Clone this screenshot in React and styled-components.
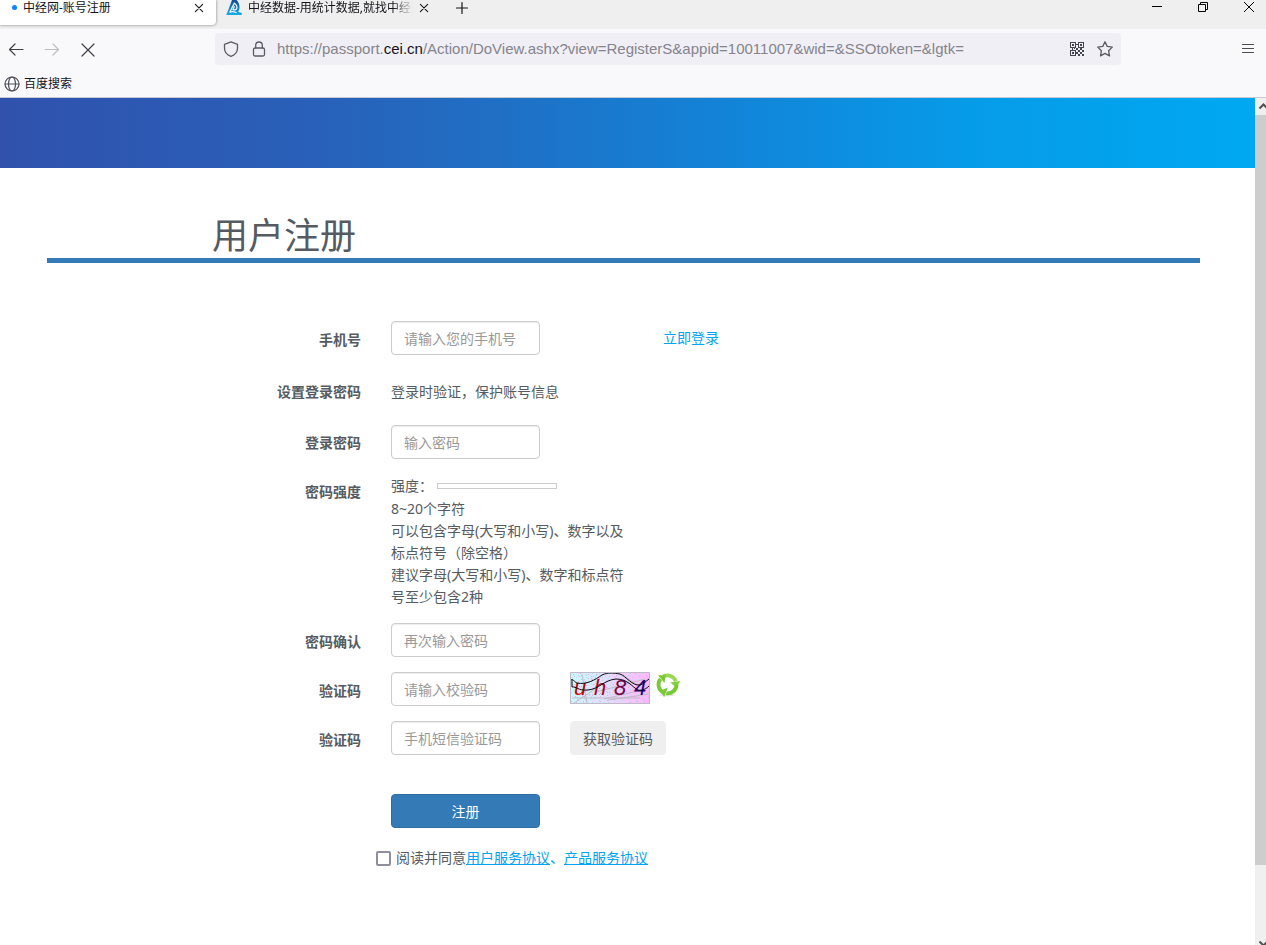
import React from "react";
import styled, { createGlobalStyle } from "styled-components";

const GlobalStyle = createGlobalStyle`
  *, *::before, *::after { box-sizing: border-box; }
  body {
    margin: 0;
    background: #fff;
    color: #555b61;
    font: 14px/22px "Noto Sans", "Noto Sans CJK SC", sans-serif;
  }
  button, input { font: inherit; color: inherit; }
  svg { display: block; flex: none; }
`;

const Window = styled.div`
  display: flex;
  flex-direction: column;
  min-height: 100vh;
`;

/* Browser chrome */

const TabStrip = styled.header`
  display: flex;
  align-items: flex-start;
  height: 29px;
  background: #efefef;
  color: #15141a;
  font-size: 12px;
  line-height: 16px;
`;

const Tab = styled.div`
  display: flex;
  align-items: flex-start;
  width: ${(p) => p.$width}px;
  height: 25px;
  padding: 0 12px 0 ${(p) => (p.$active ? 12 : 10)}px;
  gap: 6px;
  background: ${(p) => (p.$active ? "#fff" : "transparent")};
  border-radius: 0 0 4px 0;
  box-shadow: ${(p) => (p.$active ? "0 0 3px rgba(0, 0, 0, 0.5)" : "none")};
`;

const TabTitle = styled.span`
  flex: 1;
  min-width: 0;
  overflow: hidden;
  white-space: nowrap;
  mask-image: ${(p) =>
    p.$fade ? "linear-gradient(to left, transparent, #000 20px)" : "none"};
`;

const LoadingDot = styled.span`
  width: 5px;
  height: 5px;
  margin-top: 5px;
  border-radius: 50%;
  background: #0a84ff;
`;

const IconButton = styled.button`
  display: flex;
  align-items: center;
  justify-content: center;
  flex: none;
  width: ${(p) => p.$width || 16}px;
  height: ${(p) => p.$height || 16}px;
  padding: 0;
  border: 0;
  background: none;
  color: ${(p) => p.$color || "#15141a"};
`;

const WindowControls = styled.div`
  display: flex;
  margin-left: auto;
  margin-right: 2px;
  gap: 16px;
`;

const Toolbar = styled.nav`
  display: flex;
  align-items: center;
  height: 40px;
  padding-right: 3px;
  background: #f9f9fb;
`;

const NavButtons = styled.div`
  display: flex;
  flex: none;
  width: 215px;
  gap: 4px;
`;

const AddressBar = styled.div`
  display: flex;
  align-items: center;
  flex: 1;
  min-width: 0;
  height: 32px;
  padding: 0 8px;
  gap: 10px;
  border-radius: 4px;
  background: #f0eff5;
  color: #5b5b66;
`;

const AddressIcons = styled.div`
  display: flex;
  flex: none;
  gap: 12px;
`;

const Url = styled.span`
  flex: 1;
  min-width: 0;
  overflow: hidden;
  white-space: nowrap;
  color: #85848c;
  font: 15px/22px "Liberation Sans", sans-serif;

  b { color: #15141a; font-weight: 400; }
`;

const MenuSlot = styled.div`
  display: flex;
  justify-content: flex-end;
  flex: none;
  width: 142px;
`;

const Bookmarks = styled.nav`
  display: flex;
  align-items: center;
  height: 29px;
  padding-top: 2px;
  padding-left: 4px;
  background: #f9f9fb;
  border-bottom: 1px solid #c9c9d1;
`;

const Bookmark = styled.a`
  display: flex;
  align-items: center;
  gap: 4px;
  color: #15141a;
  font-size: 12px;
  line-height: 16px;
  text-decoration: none;

  svg { color: #4f4f5a; }
`;

/* Viewport */

const Viewport = styled.div`
  display: flex;
  flex: 1;
`;

const Scrollbar = styled.div`
  display: flex;
  flex-direction: column;
  flex: none;
  width: 11px;
  background: #f0f0f0;
`;

const ScrollThumb = styled.div`
  flex: 750;
  background: #cdcdcd;
`;

const ScrollTrack = styled.div`
  flex: 76;
`;

const Page = styled.div`
  flex: 1;
  min-width: 0;
`;

const Banner = styled.div`
  height: 70px;
  background: linear-gradient(to right, #3052ad, #2960b9 25%, #1f70c5 40%, #1186da 60%, #069ce9 78%, #00a8f2);
`;

const Main = styled.main`
  padding: 48px 55px 48px 47px;
`;

const Title = styled.h1`
  margin: 0 0 58px;
  padding: 0 0 2px 165px;
  border-bottom: 5px solid #337ab7;
  font-size: 36px;
  font-weight: 400;
  line-height: 40px;
`;

const Form = styled.form`
  display: flex;
  flex-direction: column;
  gap: 15px;
`;

const Row = styled.div`
  display: grid;
  grid-template-columns: minmax(0, 314fr) minmax(0, 149fr) minmax(0, 630fr);
  column-gap: 30px;
  align-items: start;
  min-height: ${(p) => p.$height || 34}px;
`;

const Label = styled.label`
  padding-top: ${(p) => p.$top || 8}px;
  text-align: right;
  font-weight: 700;
`;

const Input = styled.input`
  width: 100%;
  height: 34px;
  padding: 0 12px;
  border: 1px solid #ccc;
  border-radius: 4px;
  background: #fff;
  box-shadow: inset 0 1px 1px rgba(0, 0, 0, 0.075);

  &::placeholder { color: #999; opacity: 1; }
`;

const Note = styled.div`
  grid-column: 2 / -1;
  padding-top: 11px;
`;

const Hints = styled.div`
  grid-column: 2 / -1;
  max-width: 240px;

  p { margin: 0; }
`;

const Strength = styled.div`
  display: flex;
  align-items: center;
  height: 24px;
  gap: 4px;
`;

const Meter = styled.div`
  width: 120px;
  height: 6px;
  border: 1px solid #ccc;
`;

const Side = styled.div`
  display: flex;
  align-items: flex-start;
  gap: 5px;
  padding-left: ${(p) => p.$indent || 0}px;
  padding-top: ${(p) => p.$top || 0}px;
`;

const Link = styled.a`
  color: #00a2f2;
  text-decoration: ${(p) => (p.$underlined ? "underline" : "none")};
`;

const CodeButton = styled.button`
  height: 34px;
  padding: 2px 13px 0;
  border: 0;
  border-radius: 4px;
  background: #efefef;
`;

const Submit = styled.button`
  grid-column: 2;
  height: 34px;
  margin-top: 24px;
  padding: 2px 0 0;
  border: 1px solid #2e6da4;
  border-radius: 4px;
  background: #337ab7;
  color: #fff;
`;

const Agreement = styled.div`
  grid-column: 2 / -1;
  display: flex;
  align-items: center;
  margin-left: -15px;
  padding-top: 4px;
`;

const Checkbox = styled.input`
  appearance: none;
  width: 15px;
  height: 15px;
  margin: 0 5px 0 0;
  border: 2px solid #8f8f9d;
  border-radius: 2px;
  background: #fff;

  &:checked { background: #337ab7; }
`;

/* Icons */

const Icon = ({ size = 16, children, width = 1.3 }) => (
  <svg width={size} height={size} viewBox="0 0 16 16" fill="none" stroke="currentColor"
    strokeWidth={width} strokeLinecap="round" strokeLinejoin="round" aria-hidden="true">
    {children}
  </svg>
);

const CloseIcon = ({ size, width = 1.1 }) => (
  <Icon size={size} width={width}><path d="M2.2 2.2l11.6 11.6M13.8 2.2L2.2 13.8" /></Icon>
);

const SiteLogo = () => (
  <svg width="16" height="16" viewBox="0 0 16 16" aria-hidden="true">
    <defs>
      <linearGradient id="logo" x1="0" y1="0" x2="0" y2="1">
        <stop offset="0" stopColor="#154a9b" />
        <stop offset="1" stopColor="#14aeea" />
      </linearGradient>
    </defs>
    <path d="M6 0H10.500C12.500 1.500 13.800 5 13.500 8C13.400 9.500 12.800 11 12 11.800L15.800 13V15H0.200L1.500 12Z" fill="url(#logo)" />
    <path d="M3.600 12.500L8.300 3.200C9.800 4.200 11.300 6.500 10.800 8.300C10.300 10 8.500 10.200 7 9.600L8.500 6.300M3.600 12.500C5.500 11 8 11.500 10.500 12.800" fill="none" stroke="#f4fbff" strokeWidth="1.200" />
  </svg>
);

const QrIcon = () => (
  <svg width="16" height="16" viewBox="0 0 16 16" fill="currentColor" shapeRendering="crispEdges" aria-hidden="true">
    <path fillRule="evenodd" d="M1 1h6v6H1zM2 2v4h4V2zM9 1h6v6H9zM10 2v4h4V2zM1 9h6v6H1zM2 10v4h4v-4z" />
    <path d="M3 3h2v2H3zM11 3h2v2h-2zM3 11h2v2H3zM7 3h2v1H7zM3 7h1v2H3zM7 7h2v2H7zM5 7h1v1H5zM9 9h2v2H9zM11 7h2v2h-2zM13 9h2v2h-2zM11 11h2v2h-2zM9 13h2v2H9zM13 13h2v2h-2zM7 11h2v2H7z" />
  </svg>
);

const noise = Array.from({ length: 430 }, (_, i) => [
  (i * 37 + ((i * i) % 23)) % 80,
  (i * 19 + ((i * 7) % 13)) % 32,
]);

const Captcha = () => (
  <svg width="80" height="32" viewBox="0 0 80 32" role="img" aria-label="uh84">
    <defs>
      <linearGradient id="captchaBg">
        <stop offset="0" stopColor="#c7fbff" />
        <stop offset="0.500" stopColor="#e3dcfb" />
        <stop offset="1" stopColor="#ffb5fb" />
      </linearGradient>
      <linearGradient id="captchaInk" gradientUnits="userSpaceOnUse" x1="4" y1="0" x2="78" y2="0">
        <stop offset="0" stopColor="#d40000" />
        <stop offset="0.550" stopColor="#8a0a35" />
        <stop offset="1" stopColor="#08009a" />
      </linearGradient>
    </defs>
    <rect width="80" height="32" fill="url(#captchaBg)" />
    {noise.map(([x, y], i) => (
      <rect key={i} x={x} y={y} width="1" height="1" fill={["#b5dfe6", "#ffc0ff", "#d3b5e0"][i % 3]} />
    ))}
    <path d="M2 26H70M12 2L17 31M4 31L31 13M26 20L75 7M38 28L79 22M53 3L69 14M34 27L72 18" stroke="#bab3b8" strokeWidth="0.800" fill="none" />
    <g fill="url(#captchaInk)" fontFamily="Liberation Sans" fontSize="22" fontStyle="italic">
      <text x="4" y="23">u</text>
      <text x="24" y="23">h</text>
      <text x="44" y="23">8</text>
      <text x="64" y="23">4</text>
    </g>
    <path d="M1 8C3 6 4 10 7 11C16 13 25 8 32 3C38 0 44 1 50 2C56 4 62 14 70 13C74 12 76 9 79 7M2 15C6 14 8 19 18 18C29 17 34 8 46 7C58 7 62 15 68 18C72 19 76 17 79 14M2 8V15" stroke="#090909" fill="none" />
    <rect x="0.500" y="0.500" width="79" height="31" fill="none" stroke="#c1b8c8" />
  </svg>
);

const RefreshIcon = () => (
  <svg width="26" height="26" viewBox="0 0 26 26" aria-hidden="true">
    <ellipse cx="12" cy="23" rx="8" ry="1.500" fill="#e5e5e5" />
    {[0, 120, 240].map((turn) => (
      <g key={turn} transform={`rotate(${turn} 12.500 12.500)`}>
        <path d="M8 4.600A9 9 0 0 1 20.800 9.200" fill="none" stroke={turn === 0 ? "#99d854" : "#78c934"} strokeWidth="3.800" />
        <path d="M15.300 10.600L25.300 9L21.300 15.600Z" fill={turn === 0 ? "#86cf40" : "#78c934"} />
      </g>
    ))}
  </svg>
);

const ScrollArrow = ({ down }) => (
  <svg width="11" height={down ? 4 : 17} viewBox={down ? "0 0 11 4" : "0 0 11 17"} fill="none" stroke="#505050" strokeWidth="2" aria-hidden="true">
    <path d={down ? "M4.500 0.500L8.500 4.500L12.500 0.500" : "M4.500 10.500L8.500 6.500L12.500 10.500"} />
  </svg>
);

const Field = ({ id, label, labelTop, children, ...input }) => (
  <Row>
    <Label htmlFor={id} $top={labelTop}>{label}</Label>
    <Input id={id} {...input} />
    {children}
  </Row>
);

export default function App() {
  return (
    <Window>
      <GlobalStyle />
      <TabStrip>
        <Tab $active $width={216}>
          <LoadingDot />
          <TabTitle>中经网-账号注册</TabTitle>
          <IconButton $width={10} aria-label="关闭标签页"><CloseIcon size={10} width={1.700} /></IconButton>
        </Tab>
        <Tab $width={225}>
          <SiteLogo />
          <TabTitle $fade>中经数据-用统计数据,就找中经网</TabTitle>
          <IconButton $width={10} aria-label="关闭标签页"><CloseIcon size={10} width={1.700} /></IconButton>
        </Tab>
        <IconButton $width={41} aria-label="新建标签页">
          <Icon width={1.200}><path d="M8 2.500v11M2.500 8h11" /></Icon>
        </IconButton>
        <WindowControls>
          <IconButton $width={30} $height={14} aria-label="最小化">
            <svg width="10" height="10" stroke="#000"><path d="M0 4.500h10" /></svg>
          </IconButton>
          <IconButton $width={30} $height={14} aria-label="还原">
            <svg width="10" height="10" fill="none" stroke="#000"><path d="M.5 2.500h7v7h-7zM2.500 2.500v-2h7v7h-2" /></svg>
          </IconButton>
          <IconButton $width={30} $height={14} aria-label="关闭">
            <svg width="10" height="10" stroke="#000"><path d="M0 0l10 10M10 0L0 10" /></svg>
          </IconButton>
        </WindowControls>
      </TabStrip>

      <Toolbar>
        <NavButtons>
          <IconButton $width={32} $height={32} $color="#3f3f49" aria-label="后退">
            <Icon width={1.200}><path d="M15 8.500H1.500M7 3L1.500 8.500L7 14" /></Icon>
          </IconButton>
          <IconButton $width={32} $height={32} $color="#bdbdc3" aria-label="前进" disabled>
            <Icon width={1.200}><path d="M1 8.500h13.500M9 3L14.500 8.500L9 14" /></Icon>
          </IconButton>
          <IconButton $width={32} $height={32} $color="#3f3f49" aria-label="停止">
            <Icon width={1.200}><path d="M2 3l12 12M14 3L2 15" /></Icon>
          </IconButton>
        </NavButtons>
        <AddressBar>
          <AddressIcons>
            <Icon><path d="M8 .9L14.500 3.300V7C14.500 10.500 12.200 13.800 8 15.300C3.800 13.800 1.500 10.500 1.500 7V3.300Z" /></Icon>
            <Icon>
              <rect x="2.500" y="7" width="11" height="8" rx="1.500" />
              <path d="M4.700 7V4.300a3.300 3.300 0 0 1 6.600 0V7" />
            </Icon>
          </AddressIcons>
          <Url>https://passport.<b>cei.cn</b>/Action/DoView.ashx?view=RegisterS&amp;appid=10011007&amp;wid=&amp;SSOtoken=&amp;lgtk=</Url>
          <AddressIcons>
            <IconButton $color="#45454f" aria-label="二维码"><QrIcon /></IconButton>
            <IconButton $color="#5b5b66" aria-label="收藏">
              <Icon><path d="M8 .8L10.200 5.400L15.300 6.100L11.600 9.700L12.500 14.900L8 12.400L3.500 14.900L4.400 9.700L.7 6.100L5.800 5.400Z" /></Icon>
            </IconButton>
          </AddressIcons>
        </AddressBar>
        <MenuSlot>
          <IconButton $width={30} $height={32} $color="#4a4a55" aria-label="菜单">
            <Icon width={1.200}><path d="M2.500 3.500h11M2.500 7.500h11M2.500 11.500h11" /></Icon>
          </IconButton>
        </MenuSlot>
      </Toolbar>

      <Bookmarks>
        <Bookmark href="#search">
          <Icon width={1.200}>
            <circle cx="8" cy="8" r="7" />
            <ellipse cx="8" cy="8" rx="3.500" ry="7" />
            <path d="M1 8h14" />
          </Icon>
          百度搜索
        </Bookmark>
      </Bookmarks>

      <Viewport>
        <Page>
          <Banner />
          <Main>
            <Title>用户注册</Title>
            <Form onSubmit={(e) => e.preventDefault()}>
              <Field id="phone" label="手机号" type="tel" placeholder="请输入您的手机号">
                <Side $indent={93} $top={6}><Link href="#login">立即登录</Link></Side>
              </Field>
              <Row $height={40}>
                <Label as="div" $top={11}>设置登录密码</Label>
                <Note>登录时验证，保护账号信息</Note>
              </Row>
              <Field id="password" label="登录密码" labelTop={7} type="password" placeholder="输入密码" />
              <Row>
                <Label as="div" $top={7}>密码强度</Label>
                <Hints>
                  <Strength>强度：<Meter role="img" aria-label="密码强度" /></Strength>
                  <p>8~20个字符</p>
                  <p>可以包含字母(大写和小写)、数字以及标点符号（除空格）</p>
                  <p>建议字母(大写和小写)、数字和标点符号至少包含2种</p>
                </Hints>
              </Row>
              <Field id="confirm" label="密码确认" type="password" placeholder="再次输入密码" />
              <Field id="captcha" label="验证码" type="text" placeholder="请输入校验码">
                <Side>
                  <Captcha />
                  <IconButton $width={26} $height={26} aria-label="刷新验证码"><RefreshIcon /></IconButton>
                </Side>
              </Field>
              <Field id="sms" label="验证码" type="text" placeholder="手机短信验证码">
                <Side><CodeButton type="button">获取验证码</CodeButton></Side>
              </Field>
              <Row>
                <Submit type="submit">注册</Submit>
              </Row>
              <Row>
                <Agreement>
                  <Checkbox id="agree" type="checkbox" />
                  <label htmlFor="agree">阅读并同意</label>
                  <Link $underlined href="#user-terms">用户服务协议</Link>
                  <Link as="span">、</Link>
                  <Link $underlined href="#product-terms">产品服务协议</Link>
                </Agreement>
              </Row>
            </Form>
          </Main>
        </Page>
        <Scrollbar aria-hidden="true">
          <ScrollArrow />
          <ScrollThumb />
          <ScrollTrack />
          <ScrollArrow down />
        </Scrollbar>
      </Viewport>
    </Window>
  );
}
